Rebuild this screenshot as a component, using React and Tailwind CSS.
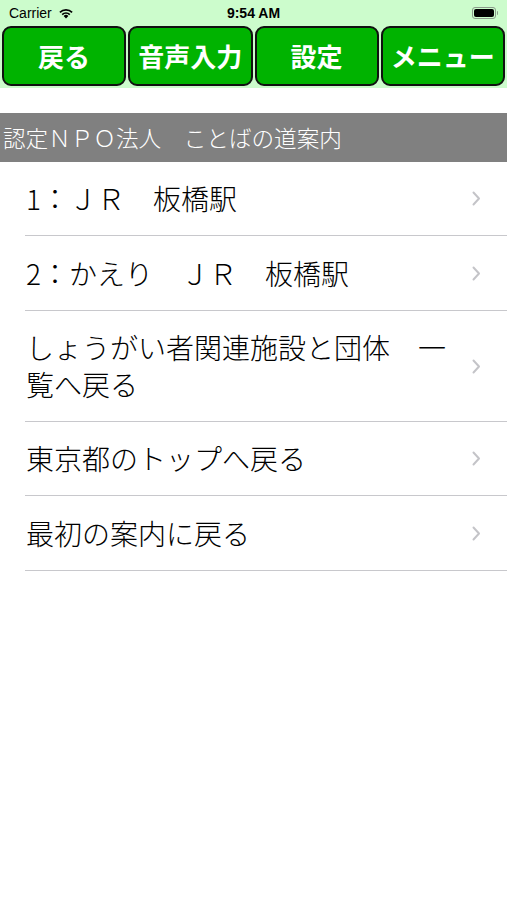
import React from "react";

const font = { fontFamily: '"Noto Sans CJK JP", "Noto Sans", sans-serif' };

function Chevron() {
  return (
    <svg width="9" height="15" viewBox="0 0 9 15" className="shrink-0">
      <path d="M1.5 1.5 L7 7.5 L1.5 13.5" fill="none" stroke="#c4c4c8" strokeWidth="2" strokeLinecap="round" strokeLinejoin="round" />
    </svg>
  );
}

function Row({ children, h }) {
  return (
    <div className={`flex items-center pl-[26px] pr-[26px] ${h}`}>
      <div className="flex-1 text-[28px] leading-[37px] font-light text-black pr-[10px]">{children}</div>
      <Chevron />
    </div>
  );
}

export default function App() {
  const items = [
    { t: "1：ＪＲ　板橋駅", h: "h-[73px]" },
    { t: "2：かえり　ＪＲ　板橋駅", h: "h-[74px]" },
    { t: "しょうがい者関連施設と団体　一覧へ戻る", h: "h-[110px]" },
    { t: "東京都のトップへ戻る", h: "h-[73px]" },
    { t: "最初の案内に戻る", h: "h-[74px]" },
  ];
  return (
    <div className="w-[507px] h-[900px] bg-white overflow-hidden" style={font}>
      <div className="bg-[#ccfccc] h-[88px] flex flex-col">
        <div className="h-[26px] relative flex items-center px-[9px] text-[14px] text-black" style={{ fontFamily: '"Liberation Sans", "Noto Sans", sans-serif' }}>
          <span>Carrier</span>
          <svg width="16" height="12" viewBox="0 0 16 12" className="ml-[6px]">
            <path d="M8 11.5 L5.6 9 A3.4 3.4 0 0 1 10.4 9 Z" fill="#000" />
            <path d="M3.6 7 A6.2 6.2 0 0 1 12.4 7 L11.2 8.2 A4.5 4.5 0 0 0 4.8 8.2 Z" fill="#000" />
            <path d="M1.3 4.7 A9.5 9.5 0 0 1 14.7 4.7 L13.5 5.9 A7.8 7.8 0 0 0 2.5 5.9 Z" fill="#000" />
          </svg>
          <span className="absolute left-0 right-0 text-center font-bold">9:54 AM</span>
          <div className="ml-auto flex items-center">
            <div className="w-[24px] h-[12px] rounded-[3px] border border-[#8a9a8a] p-[1px]">
              <div className="w-full h-full bg-black rounded-[2px]" />
            </div>
            <div className="w-[1.5px] h-[4px] bg-[#8a9a8a] rounded-r ml-[1px]" />
          </div>
        </div>
        <div className="flex gap-[2px] px-[2px] h-[60px]">
          {["戻る", "音声入力", "設定", "メニュー"].map((l) => (
            <div key={l} className="flex-1 bg-[#00b300] border-2 border-[#111] rounded-[9px] flex items-center justify-center text-white font-bold text-[26px] leading-none whitespace-nowrap">
              {l}
            </div>
          ))}
        </div>
      </div>
      <div className="h-[25px]" />
      <div className="h-[49px] bg-[#808080] flex items-center pl-[3px] text-[22.6px] font-light text-white whitespace-nowrap">
        認定ＮＰＯ法人　ことばの道案内
      </div>
      <div>
        {items.map((it) => (
          <div key={it.t}>
            <Row h={it.h}>{it.t}</Row>
            <div className="ml-[25px] h-[1px] bg-[#c8c8cc]" />
          </div>
        ))}
      </div>
    </div>
  );
}
